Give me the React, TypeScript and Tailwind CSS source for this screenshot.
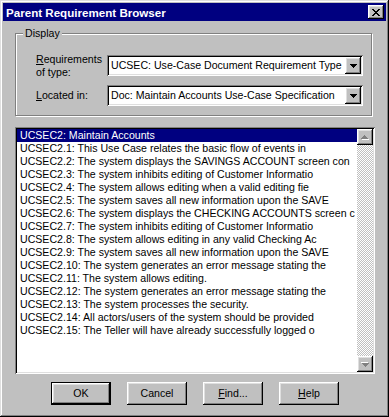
import React from 'react';

const RAISED =
  'shadow-[inset_-1px_-1px_#000,inset_1px_1px_#fff,inset_-2px_-2px_#808080,inset_2px_2px_#dfdfdf]';
const SUNKEN =
  'shadow-[inset_1px_1px_#808080,inset_-1px_-1px_#fff,inset_2px_2px_#000,inset_-2px_-2px_#dfdfdf]';

const ROWS = [
  'UCSEC2: Maintain Accounts',
  'UCSEC2.1: This Use Case relates the basic flow of events in',
  'UCSEC2.2: The system displays the SAVINGS ACCOUNT screen con',
  'UCSEC2.3: The system inhibits editing of Customer Informatio',
  'UCSEC2.4: The system allows editing when a valid editing fie',
  'UCSEC2.5: The system saves all new information upon the SAVE',
  'UCSEC2.6: The system displays the CHECKING ACCOUNTS screen c',
  'UCSEC2.7: The system inhibits editing of Customer Informatio',
  'UCSEC2.8: The system allows editing in any valid Checking Ac',
  'UCSEC2.9: The system saves all new information upon the SAVE',
  'UCSEC2.10: The system generates an error message stating the',
  'UCSEC2.11: The system allows editing.',
  'UCSEC2.12: The system generates an error message stating the',
  'UCSEC2.13: The system processes the security.',
  'UCSEC2.14: All actors/users of the system should be provided',
  'UCSEC2.15: The Teller will have already successfully logged o',
];

const DownArrow = () => (
  <svg width="7" height="4" viewBox="0 0 7 4" shapeRendering="crispEdges">
    <path d="M0 0h7v1H0zM1 1h5v1H1zM2 2h3v1H2zM3 3h1v1H3z" fill="#000" />
  </svg>
);

const ScrollArrow = ({ up }: { up?: boolean }) => (
  <div className={`w-[16px] h-[16px] bg-[#c0c0c0] ${RAISED} flex items-center justify-center`}>
    <svg width="8" height="5" viewBox="0 0 8 5" shapeRendering="crispEdges" className={up ? '' : 'rotate-180'}>
      <path d="M4 1h1v1H4zM3 2h3v1H3zM2 3h5v1H2zM1 4h7v1H1z" fill="#fff" />
      <path d="M3 0h1v1H3zM2 1h3v1H2zM1 2h5v1H1zM0 3h7v1H0z" fill="#808080" />
    </svg>
  </div>
);

const Combo = ({ text }: { text: string }) => (
  <div className={`w-[256px] h-[21px] bg-white ${SUNKEN} flex items-center p-[2px]`}>
    <span className="flex-1 pl-[2px] whitespace-nowrap overflow-hidden leading-[13px]">{text}</span>
    <div className={`w-[16px] h-[17px] bg-[#c0c0c0] ${RAISED} flex items-center justify-center`}>
      <DownArrow />
    </div>
  </div>
);

const Button = ({ children, isDefault }: { children: React.ReactNode; isDefault?: boolean }) => (
  <div className={`w-[60px] h-[23px] ${isDefault ? 'border border-black' : ''}`}>
    <div className={`w-full h-full bg-[#c0c0c0] ${RAISED} flex items-center justify-center leading-[13px]`}>
      {children}
    </div>
  </div>
);

export default function App() {
  return (
    <div className="w-[389px] h-[417px] bg-[#c0c0c0] p-[3px] text-[10.6px] text-black font-['Liberation_Sans',Arial,sans-serif] shadow-[inset_-1px_-1px_#000,inset_1px_1px_#dfdfdf,inset_-2px_-2px_#808080,inset_2px_2px_#fff] select-none">
      {/* title bar */}
      <div className="h-[18px] bg-[#000080] flex items-center justify-between pl-[3px] pr-[2px]">
        <span className="text-white font-bold text-[11.6px] leading-[13px]">Parent Requirement Browser</span>
        <div className={`w-[16px] h-[14px] bg-[#c0c0c0] ${RAISED} flex items-center justify-center`}>
          <svg width="8" height="7" viewBox="0 0 8 7" shapeRendering="crispEdges">
            <path
              d="M0 0h2v1H0zM6 0h2v1H6zM1 1h2v1H1zM5 1h2v1H5zM2 2h4v1H2zM3 3h2v1H3zM2 4h4v1H2zM1 5h2v1H1zM5 5h2v1H5zM0 6h2v1H0zM6 6h2v1H6z"
              fill="#000"
            />
          </svg>
        </div>
      </div>

      <div className="pl-[12px]">
        {/* Display group */}
        <div className="relative mt-[12px] w-[357px] border border-[#808080] shadow-[inset_1px_1px_#fff,1px_1px_#fff] pt-[19px] pb-[9px] pl-[20px] pr-[8px] flex flex-col gap-[7px]">
          <span className="absolute -top-[7px] left-[7px] px-[2px] bg-[#c0c0c0] leading-[13px]">Display</span>
          <div className="flex items-center">
            <div className="w-[71px] leading-[12.5px]">
              <div>
                <span className="underline">R</span>equirements
              </div>
              <div>of type:</div>
            </div>
            <Combo text="UCSEC: Use-Case Document Requirement Type" />
          </div>
          <div className="flex items-center">
            <div className="w-[71px] leading-[13px]">
              <span className="underline">L</span>ocated in:
            </div>
            <Combo text="Doc: Maintain Accounts Use-Case Specification" />
          </div>
        </div>

        {/* list box */}
        <div className={`mt-[11px] w-[360px] h-[247px] bg-white ${SUNKEN} p-[2px] flex`}>
          <div className="flex-1 overflow-hidden">
            {ROWS.map((r, i) => (
              <div
                key={i}
                className={`h-[13px] leading-[13px] pl-[3px] whitespace-nowrap overflow-hidden ${
                  i === 0 ? 'bg-[#000080] text-white' : ''
                }`}
              >
                {r}
              </div>
            ))}
          </div>
          <div className="w-[16px] flex flex-col">
            <ScrollArrow up />
            <div className="flex-1 bg-[repeating-conic-gradient(#c0c0c0_0_25%,#fff_0_50%)] bg-[length:2px_2px]" />
            <ScrollArrow />
          </div>
        </div>

        {/* buttons */}
        <div className="mt-[8px] pl-[36px] flex gap-[16px]">
          <Button isDefault>OK</Button>
          <Button>Cancel</Button>
          <Button>
            <span>
              <span className="underline">F</span>ind...
            </span>
          </Button>
          <Button>
            <span>
              <span className="underline">H</span>elp
            </span>
          </Button>
        </div>
      </div>
    </div>
  );
}
